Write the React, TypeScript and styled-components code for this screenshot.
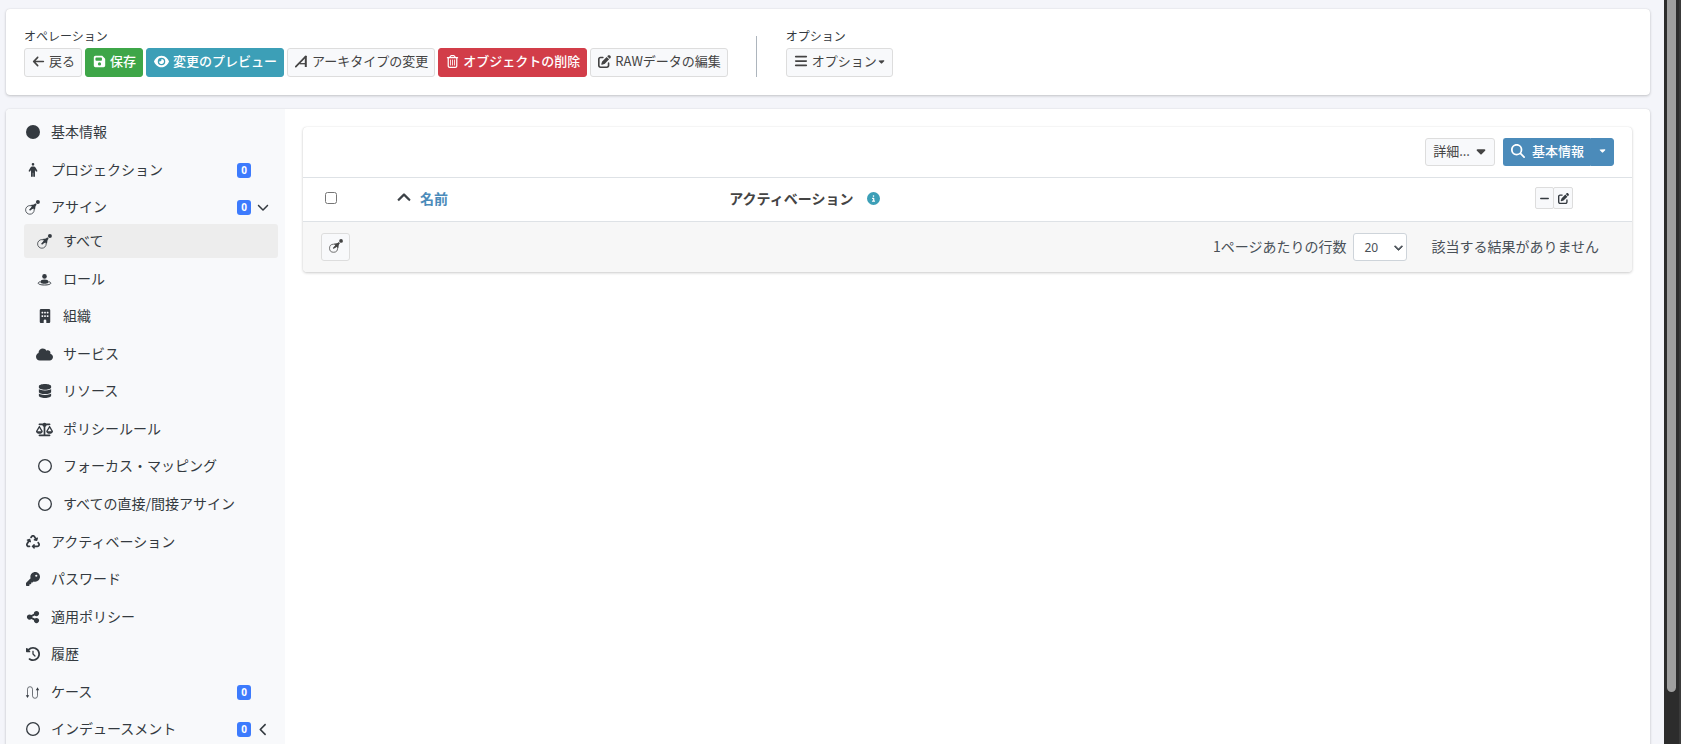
import React from "react";
import styled, { createGlobalStyle, css } from "styled-components";
import {
  FaArrowLeft,
  FaBars,
  FaBuilding,
  FaCaretDown,
  FaChevronDown,
  FaChevronLeft,
  FaChevronUp,
  FaCircle,
  FaCircleInfo,
  FaClockRotateLeft,
  FaCloud,
  FaDatabase,
  FaEye,
  FaFloppyDisk,
  FaKey,
  FaMagnifyingGlass,
  FaMinus,
  FaPenToSquare,
  FaPerson,
  FaRecycle,
  FaRegCircle,
  FaRegTrashCan,
  FaScaleBalanced,
  FaShareNodes,
} from "react-icons/fa6";

const GlobalStyle = createGlobalStyle`
  *, *::before, *::after { box-sizing: border-box; }
  body {
    margin: 0;
    overflow: hidden;
    background: #f4f5fa;
    color: #343a40;
    font-family: "Noto Sans CJK JP", "Noto Sans", sans-serif;
    font-size: 14px;
    line-height: 20px;
  }
  button, select, input { font-family: inherit; margin: 0; }
  button { cursor: pointer; }
  svg { display: block; flex: none; }
`;

const Viewport = styled.div`
  display: flex;
  height: 100vh;
`;

const Page = styled.main`
  flex: 1;
  min-width: 0;
  overflow: hidden;
  display: flex;
  flex-direction: column;
  gap: 14px;
  padding: 9px 14px 0 6px;
`;

const ScrollTrack = styled.div`
  flex: none;
  width: 17px;
  padding: 0 3px;
  background: #2c2c2c;
  border-right: 2px solid #3a3a3a;
`;

const ScrollThumb = styled.div`
  height: 93%;
  border-radius: 0 0 5px 5px;
  background: #9f9f9f;
`;

const surface = css`
  background: #fff;
  border-radius: 4px;
  box-shadow: 0 0 1px rgba(0, 0, 0, 0.13), 0 1px 3px rgba(0, 0, 0, 0.2);
`;

const Toolbar = styled.header`
  ${surface}
  flex: none;
  display: flex;
  padding: 18px;
`;

const ToolGroup = styled.section`
  display: flex;
  flex-direction: column;
  gap: 4px;
`;

const GroupLabel = styled.h2`
  margin: 0;
  font-size: 12px;
  font-weight: 400;
  line-height: 17px;
`;

const ButtonRow = styled.div`
  display: flex;
  gap: 3px;
`;

const Divider = styled.div`
  width: 1px;
  margin: 9px 29px 0 28px;
  background: #adb5bd;
`;

const tones = {
  light: { bg: "#f8f9fb", border: "#dddddd", fg: "#444444" },
  save: { bg: "#3ea648", border: "#3ea648", fg: "#ffffff" },
  info: { bg: "#3c9fb7", border: "#3c9fb7", fg: "#ffffff" },
  danger: { bg: "#d23d49", border: "#d23d49", fg: "#ffffff" },
  primary: { bg: "#4b8bba", border: "#4b8bba", fg: "#ffffff" },
};

const Button = styled.button<{ $tone?: keyof typeof tones; $compact?: boolean }>`
  display: flex;
  align-items: center;
  gap: 4px;
  height: ${(p) => (p.$compact ? "28px" : "29px")};
  padding: 0 6px 3px 7px;
  border: 1px solid ${(p) => tones[p.$tone ?? "light"].border};
  border-radius: 3px;
  background: ${(p) => tones[p.$tone ?? "light"].bg};
  color: ${(p) => tones[p.$tone ?? "light"].fg};
  font-size: 13px;
  font-weight: ${(p) => (p.$tone ? 500 : 400)};
  line-height: 20px;
  white-space: nowrap;
`;

const MenuButton = styled(Button)`
  gap: 0;
  & > svg:first-child {
    margin-right: 4px;
  }
`;

const Workspace = styled.div`
  ${surface}
  flex: none;
  display: flex;
`;

const Sidebar = styled.nav`
  flex: none;
  width: 279px;
  padding: 6px 7px 18px 18px;
  border-radius: 4px 0 0 4px;
  background: #f8f9fb;
`;

const MenuList = styled.ul`
  list-style: none;
  margin: 0;
  padding: 0;
`;

const MenuItem = styled.li`
  margin-bottom: 3px;
  &:nth-child(odd) {
    margin-bottom: 4px;
  }
`;

const MenuLink = styled.a<{ $nested?: boolean; $active?: boolean }>`
  display: flex;
  align-items: center;
  gap: 10px;
  height: 34px;
  padding: 0 9px 0 ${(p) => (p.$nested ? "12px" : "0")};
  border-radius: 3px;
  background: ${(p) => (p.$active ? "#ededed" : "transparent")};
  color: #343a40;
  font-size: 14px;
  line-height: 20px;
  text-decoration: none;
`;

const MenuIcon = styled.span`
  display: flex;
  justify-content: center;
  width: 17px;
`;

const MenuText = styled.span`
  flex: 1;
  padding-bottom: 2px;
  white-space: nowrap;
`;

const Badge = styled.span`
  width: 14px;
  border-radius: 3px;
  background: #3d7bfd;
  color: #fff;
  font-family: "Noto Sans", sans-serif;
  font-size: 10px;
  font-weight: 700;
  line-height: 15px;
  text-align: center;
`;

const Expander = styled.span`
  display: flex;
  justify-content: center;
  width: 12px;
  margin-left: -4px;
`;

const Content = styled.section`
  flex: 1;
  min-width: 0;
  padding: 18px;
`;

const TableCard = styled.div`
  ${surface}
  overflow: hidden;
`;

const SearchBar = styled.div`
  display: flex;
  justify-content: flex-end;
  gap: 8px;
  padding: 11px 18px;
`;

const SplitButton = styled.div`
  display: flex;
  & > button:first-child {
    gap: 7px;
    border-right-width: 0;
    border-radius: 3px 0 0 3px;
  }
  & > button:last-child {
    border-radius: 0 3px 3px 0;
  }
`;

const Table = styled.table`
  width: 100%;
  border-collapse: collapse;
  table-layout: fixed;
`;

const HeadCell = styled.th<{ $width?: string }>`
  width: ${(p) => p.$width ?? "auto"};
  height: 44px;
  padding: 0 0 3px;
  border-top: 1px solid #dee2e6;
  border-bottom: 1px solid #dee2e6;
  font-size: 14px;
  font-weight: 700;
  line-height: 20px;
  text-align: left;
`;

const Inline = styled.div`
  display: flex;
  align-items: center;
  gap: 14px;
  color: #444;
`;

const SortLink = styled.a`
  display: flex;
  align-items: center;
  gap: 9px;
  color: #4b8bba;
  text-decoration: none;
  & svg {
    color: #343a40;
    stroke: currentColor;
    stroke-width: 24px;
  }
`;

const Check = styled.input`
  display: block;
  width: 12px;
  height: 12px;
  margin: 0 0 0 22px;
`;

const CellActions = styled.div`
  display: flex;
`;

const SmallButton = styled.button`
  display: flex;
  align-items: center;
  justify-content: center;
  width: 19px;
  height: 22px;
  padding: 0;
  border: 1px solid #dddddd;
  border-radius: 2px;
  background: #f8f9fb;
  color: #343a40;
  & + & {
    width: 20px;
    margin-left: -1px;
  }
`;

const TableFooter = styled.footer`
  display: flex;
  align-items: center;
  padding: 11px 33px 11px 18px;
  background: #f7f7f7;
  color: #495057;
`;

const PageSize = styled.label`
  display: flex;
  align-items: center;
  gap: 7px;
  margin-left: auto;
  margin-right: 24px;
`;

const SelectBox = styled.span`
  position: relative;
  display: flex;
  & svg {
    position: absolute;
    right: 4px;
    top: 10px;
    stroke: currentColor;
    stroke-width: 48px;
    pointer-events: none;
  }
`;

const Select = styled.select`
  appearance: none;
  width: 54px;
  height: 28px;
  padding: 0 0 0 10px;
  border: 1px solid #ced4da;
  border-radius: 3px;
  background: #fff;
  color: #495057;
  font-family: "Noto Sans", sans-serif;
  font-size: 12px;
`;

const FooterText = styled.span`
  padding-bottom: 2px;
`;

function AssignmentIcon({ size = 15 }: { size?: number }) {
  return (
    <svg width={size} height={size} viewBox="0 0 15 15" fill="none" stroke="currentColor">
      <circle cx="4.9" cy="9.9" r="4.3" strokeWidth="0.8" />
      <path d="M4.6 10.2 8 6.8" strokeWidth="1.5" />
      <path d="M5.2 5 9.6 4.4 10.6 5.4 10 9.8 8.4 8.4 6.4 9.6 5.6 9 7 6.2Z" fill="currentColor" stroke="none" />
      <path d="M9 6 11 4" strokeWidth="2" />
      <circle cx="12.9" cy="2.1" r="2" fill="currentColor" stroke="none" />
    </svg>
  );
}

function ArchetypeIcon() {
  return (
    <svg width="13" height="13" viewBox="0 0 13 13" fill="none" stroke="currentColor">
      <path d="M.8 11.6 10.8 1.4" strokeWidth="1.7" strokeLinecap="round" />
      <path d="M10.8 1v11" strokeWidth="2" />
      <path d="M4.6 8.7h6" strokeWidth="1.3" />
    </svg>
  );
}

function RoleIcon() {
  return (
    <svg width="15" height="15" viewBox="0 0 15 15" fill="currentColor">
      <circle cx="7.5" cy="4.4" r="2.3" />
      <path d="M3.6 11V9.8C3.6 8.2 5 7.4 7.5 7.4s3.9.8 3.9 2.4V11c-1.9 1-5.9 1-7.8 0Z" />
      <path
        d="M3.4 9.6C-.8 10.8 1.2 13 7.5 13s8.3-2.2 4.1-3.4"
        fill="none"
        stroke="currentColor"
        strokeWidth="1"
      />
    </svg>
  );
}

function CaseIcon() {
  return (
    <svg width="15" height="13" viewBox="0 0 15 13" fill="none" stroke="currentColor" strokeWidth="0.7">
      <path d="M2.5 11V3.2a2.5 2.5 0 0 1 5 0v6.6a2.5 2.5 0 0 0 5 0V3.5" />
      <path d="M.8 9.3h3.4L2.5 12Z M10.8 4.2h3.4L12.5 1.3Z" fill="currentColor" stroke="none" />
    </svg>
  );
}

type Entry = {
  label: string;
  icon: React.ReactNode;
  badge?: number;
  state?: "open" | "closed";
  active?: boolean;
  children?: Entry[];
};

const menu: Entry[] = [
  { label: "基本情報", icon: <FaCircle size={14} /> },
  { label: "プロジェクション", icon: <FaPerson size={14} />, badge: 0 },
  {
    label: "アサイン",
    icon: <AssignmentIcon />,
    badge: 0,
    state: "open",
    children: [
      { label: "すべて", icon: <AssignmentIcon />, active: true },
      { label: "ロール", icon: <RoleIcon /> },
      { label: "組織", icon: <FaBuilding size={14} /> },
      { label: "サービス", icon: <FaCloud size={17} /> },
      { label: "リソース", icon: <FaDatabase size={14} /> },
      { label: "ポリシールール", icon: <FaScaleBalanced size={17} /> },
      { label: "フォーカス・マッピング", icon: <FaRegCircle size={14} /> },
      { label: "すべての直接/間接アサイン", icon: <FaRegCircle size={14} /> },
    ],
  },
  { label: "アクティベーション", icon: <FaRecycle size={14} /> },
  { label: "パスワード", icon: <FaKey size={14} /> },
  { label: "適用ポリシー", icon: <FaShareNodes size={14} /> },
  { label: "履歴", icon: <FaClockRotateLeft size={14} /> },
  { label: "ケース", icon: <CaseIcon />, badge: 0 },
  { label: "インデュースメント", icon: <FaRegCircle size={14} />, badge: 0, state: "closed" },
];

function MenuEntry({ entry, nested }: { entry: Entry; nested?: boolean }) {
  return (
    <MenuItem>
      <MenuLink href="#" $nested={nested} $active={entry.active}>
        <MenuIcon>{entry.icon}</MenuIcon>
        <MenuText>{entry.label}</MenuText>
        {entry.badge !== undefined && <Badge>{entry.badge}</Badge>}
        {!nested && (
          <Expander>
            {entry.state === "open" && <FaChevronDown size={12} />}
            {entry.state === "closed" && <FaChevronLeft size={13} />}
          </Expander>
        )}
      </MenuLink>
      {entry.children && (
        <MenuList>
          {entry.children.map((child) => (
            <MenuEntry key={child.label} entry={child} nested />
          ))}
        </MenuList>
      )}
    </MenuItem>
  );
}

export default function App() {
  return (
    <>
      <GlobalStyle />
      <Viewport>
        <Page>
          <Toolbar>
            <ToolGroup>
              <GroupLabel>オペレーション</GroupLabel>
              <ButtonRow>
                <Button><FaArrowLeft size={13} />戻る</Button>
                <Button $tone="save"><FaFloppyDisk size={13} />保存</Button>
                <Button $tone="info"><FaEye size={15} />変更のプレビュー</Button>
                <Button><ArchetypeIcon />アーキタイプの変更</Button>
                <Button $tone="danger"><FaRegTrashCan size={13} />オブジェクトの削除</Button>
                <Button><FaPenToSquare size={13} />RAWデータの編集</Button>
              </ButtonRow>
            </ToolGroup>
            <Divider />
            <ToolGroup>
              <GroupLabel>オプション</GroupLabel>
              <ButtonRow>
                <MenuButton><FaBars size={14} />オプション<FaCaretDown size={9} /></MenuButton>
              </ButtonRow>
            </ToolGroup>
          </Toolbar>
          <Workspace>
            <Sidebar>
              <MenuList>
                {menu.map((entry) => (
                  <MenuEntry key={entry.label} entry={entry} />
                ))}
              </MenuList>
            </Sidebar>
            <Content>
              <TableCard>
                <SearchBar>
                  <Button $compact>詳細...<FaCaretDown size={14} /></Button>
                  <SplitButton>
                    <Button $compact $tone="primary"><FaMagnifyingGlass size={14} />基本情報</Button>
                    <Button $compact $tone="primary" aria-label="検索オプション"><FaCaretDown size={9} /></Button>
                  </SplitButton>
                </SearchBar>
                <Table>
                  <thead>
                    <tr>
                      <HeadCell $width="94px"><Check type="checkbox" aria-label="すべて選択" /></HeadCell>
                      <HeadCell $width="25%">
                        <SortLink href="#"><FaChevronUp size={14} />名前</SortLink>
                      </HeadCell>
                      <HeadCell>
                        <Inline>アクティベーション<FaCircleInfo size={13} color="#3c9fb7" /></Inline>
                      </HeadCell>
                      <HeadCell $width="97px">
                        <CellActions>
                          <SmallButton aria-label="アサイン解除"><FaMinus size={11} /></SmallButton>
                          <SmallButton aria-label="編集"><FaPenToSquare size={11} /></SmallButton>
                        </CellActions>
                      </HeadCell>
                    </tr>
                  </thead>
                </Table>
                <TableFooter>
                  <Button $compact aria-label="アサインを追加"><AssignmentIcon size={14} /></Button>
                  <PageSize>
                    <FooterText>1ページあたりの行数</FooterText>
                    <SelectBox>
                      <Select defaultValue="20">
                        <option>10</option>
                        <option>20</option>
                        <option>50</option>
                      </Select>
                      <FaChevronDown size={9} />
                    </SelectBox>
                  </PageSize>
                  <FooterText>該当する結果がありません</FooterText>
                </TableFooter>
              </TableCard>
            </Content>
          </Workspace>
        </Page>
        <ScrollTrack>
          <ScrollThumb />
        </ScrollTrack>
      </Viewport>
    </>
  );
}
